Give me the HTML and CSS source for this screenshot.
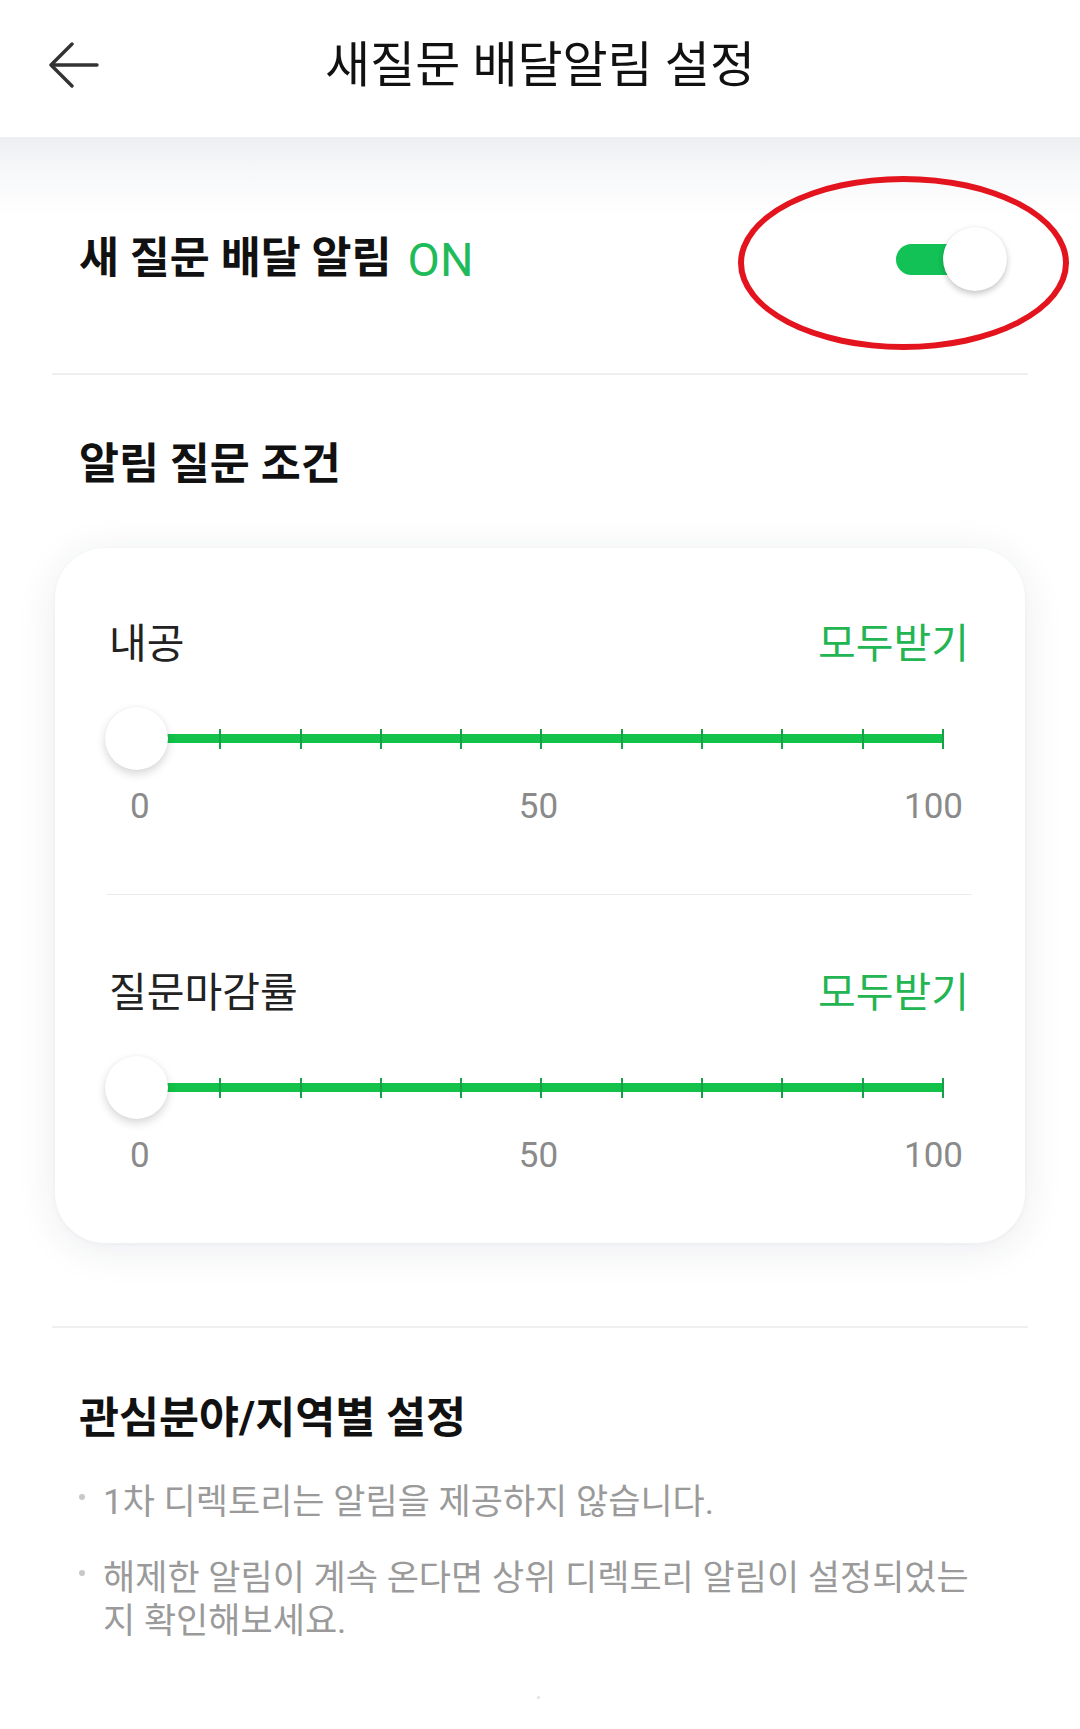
FILE: index.html
```html
<!DOCTYPE html>
<html lang="ko">
<head>
<meta charset="utf-8">
<title>새질문 배달알림 설정</title>
<link rel="stylesheet" href="styles.css">
</head>
<body>
<div class="page">
  <header class="topbar">
    <div class="back">
      <svg width="50" height="46" viewBox="0 0 50 46" fill="none" stroke="#333" stroke-width="3.4" stroke-linecap="round" stroke-linejoin="round">
        <path d="M48 23H3"/>
        <path d="M23 2L2 23L23 44"/>
      </svg>
    </div>
    <h1 class="title">새질문 배달알림 설정</h1>
    <div class="spacer"></div>
  </header>

  <section class="toggle-row">
    <div class="toggle-label">새 질문 배달 알림 <span class="on">ON</span></div>
    <div class="switch">
      <div class="switch-track"></div>
      <div class="switch-knob"></div>
    </div>
    <div class="annotation"></div>
  </section>

  <hr class="divider">

  <section class="conditions">
    <h2 class="section-title">알림 질문 조건</h2>
    <div class="card">
      <div class="cond">
        <div class="cond-head">
          <span class="cond-name">내공</span>
          <span class="cond-value">모두받기</span>
        </div>
        <div class="slider">
          <div class="track">
            <span class="seg"></span><span class="seg"></span><span class="seg"></span><span class="seg"></span><span class="seg"></span>
            <span class="seg"></span><span class="seg"></span><span class="seg"></span><span class="seg"></span><span class="seg"></span>
          </div>
          <div class="knob"></div>
        </div>
        <div class="scale">
          <span class="s-left">0</span>
          <span class="s-mid">50</span>
          <span class="s-right">100</span>
        </div>
      </div>
      <hr class="card-divider">
      <div class="cond">
        <div class="cond-head">
          <span class="cond-name">질문마감률</span>
          <span class="cond-value">모두받기</span>
        </div>
        <div class="slider">
          <div class="track">
            <span class="seg"></span><span class="seg"></span><span class="seg"></span><span class="seg"></span><span class="seg"></span>
            <span class="seg"></span><span class="seg"></span><span class="seg"></span><span class="seg"></span><span class="seg"></span>
          </div>
          <div class="knob"></div>
        </div>
        <div class="scale">
          <span class="s-left">0</span>
          <span class="s-mid">50</span>
          <span class="s-right">100</span>
        </div>
      </div>
    </div>
  </section>

  <hr class="divider divider-2">

  <section class="interest">
    <h2 class="section-title">관심분야/지역별 설정</h2>
    <ul class="notes">
      <li><span class="dot"></span><span class="note-text">1차 디렉토리는 알림을 제공하지 않습니다.</span></li>
      <li><span class="dot"></span><span class="note-text">해제한 알림이 계속 온다면 상위 디렉토리 알림이 설정되었는지 확인해보세요.</span></li>
    </ul>
  </section>

  <div class="scroll-dot"></div>
</div>
</body>
</html>
```

FILE: styles.css
```css
* { box-sizing: border-box; }

html, body {
  margin: 0;
  padding: 0;
  background: #ffffff;
}

body {
  font-family: "Roboto", "Noto Sans CJK KR", "Noto Sans", sans-serif;
  color: #111;
  width: 1080px;
}

.page {
  width: 1080px;
  min-height: 1729px;
  position: relative;
  background: #fff;
}

/* header */
.topbar {
  height: 137px;
  display: grid;
  grid-template-columns: 160px 1fr 160px;
  align-items: center;
  background: #fff;
  position: relative;
  z-index: 2;
}

.back {
  padding-left: 49px;
  margin-top: -8px;
  display: flex;
  align-items: center;
}

.title {
  margin: 0;
  text-align: center;
  font-size: 49px;
  font-weight: 400;
  color: #111;
  line-height: 1;
  margin-top: -6px;
}

/* toggle row */
.toggle-row {
  position: relative;
  height: 236px;
  display: flex;
  align-items: center;
  justify-content: space-between;
  padding: 8px 73px 0 79px;
  background: linear-gradient(to bottom, #eceef2 0px, #f6f7f9 30px, #ffffff 80px);
}

.toggle-label {
  font-size: 43.5px;
  font-weight: 700;
  color: #111;
  line-height: 1;
  display: flex;
  align-items: center;
}

.on {
  color: #1fbb5a;
  font-weight: 400;
  font-size: 47px;
  margin-left: 16px;
}

.switch {
  width: 111px;
  height: 64px;
  display: flex;
  align-items: center;
  position: relative;
}

.switch-track {
  width: 92px;
  height: 31px;
  border-radius: 16px;
  background: #12c256;
}

.switch-knob {
  position: absolute;
  right: 0;
  top: 0;
  width: 64px;
  height: 64px;
  border-radius: 50%;
  background: #fff;
  box-shadow: 0 3px 6px rgba(0, 0, 0, 0.22), 0 0 1px rgba(0, 0, 0, 0.1);
}

.annotation {
  position: absolute;
  left: 738px;
  top: 39px;
  width: 331px;
  height: 174px;
  border: 6px solid #e3141e;
  border-radius: 50%;
  pointer-events: none;
}

/* dividers */
.divider {
  margin: 0 52px;
  border: 0;
  height: 2px;
  background: #efefef;
}

/* conditions */
.conditions {
  padding: 62px 55px 0 55px;
}

.section-title {
  margin: 0 0 0 24px;
  font-size: 43.5px;
  font-weight: 700;
  line-height: 56px;
  color: #111;
}

.card {
  margin-top: 55px;
  height: 695px;
  background: #fff;
  border-radius: 50px;
  box-shadow: 0 6px 40px rgba(30, 40, 80, 0.09), 0 1px 4px rgba(30, 40, 80, 0.04);
  padding: 68px 53px 0 53px;
}

.cond-head {
  display: flex;
  justify-content: space-between;
  align-items: center;
  height: 48px;
  padding: 0 3px 0 1px;
}

.cond-name {
  font-size: 41px;
  color: #222;
}

.cond-value {
  font-size: 41px;
  color: #22b552;
}

.slider {
  position: relative;
  height: 63px;
  margin: 43px 29px 0 32px;
  display: flex;
  align-items: center;
}

.track {
  flex: 1;
  height: 9px;
  background: #12c24a;
  display: flex;
}

.seg {
  flex: 1;
  position: relative;
}

.seg::after {
  content: "";
  position: absolute;
  right: -1px;
  top: -5.5px;
  width: 2px;
  height: 20px;
  background: #16a047;
}

.knob {
  position: absolute;
  left: -35px;
  top: 0;
  width: 63px;
  height: 63px;
  border-radius: 50%;
  background: #fff;
  box-shadow: 0 4px 10px rgba(0, 0, 0, 0.16), 0 0 2px rgba(0, 0, 0, 0.06);
}

.scale {
  display: grid;
  grid-template-columns: 1fr auto 1fr;
  margin: 17px 9px 0 22px;
  font-size: 35px;
  line-height: 40px;
  color: #8a8a8a;
}

.s-left { justify-self: start; }
.s-mid { padding-right: 16px; }
.s-right { justify-self: end; }

.card-divider {
  margin: 67px 0 70px -1px;
  border: 0;
  height: 1px;
  background: #ebebeb;
}

.divider-2 {
  margin-top: 83px;
}

/* interest */
.interest {
  padding: 63px 90px 0 79px;
}

.interest .section-title {
  margin-left: 0;
}

.notes {
  list-style: none;
  margin: 34px 0 0 0;
  padding: 0;
}

.notes li {
  display: flex;
  align-items: flex-start;
  margin-bottom: 33px;
}

.dot {
  flex: none;
  width: 6px;
  height: 6px;
  border-radius: 50%;
  background: #c8c8c8;
  margin: 13px 18px 0 0;
}

.note-text {
  font-size: 35px;
  line-height: 43px;
  color: #9a9a9a;
}

.scroll-dot {
  position: absolute;
  left: 537px;
  top: 1696px;
  width: 3px;
  height: 3px;
  border-radius: 50%;
  background: #e2e2e2;
}
```
